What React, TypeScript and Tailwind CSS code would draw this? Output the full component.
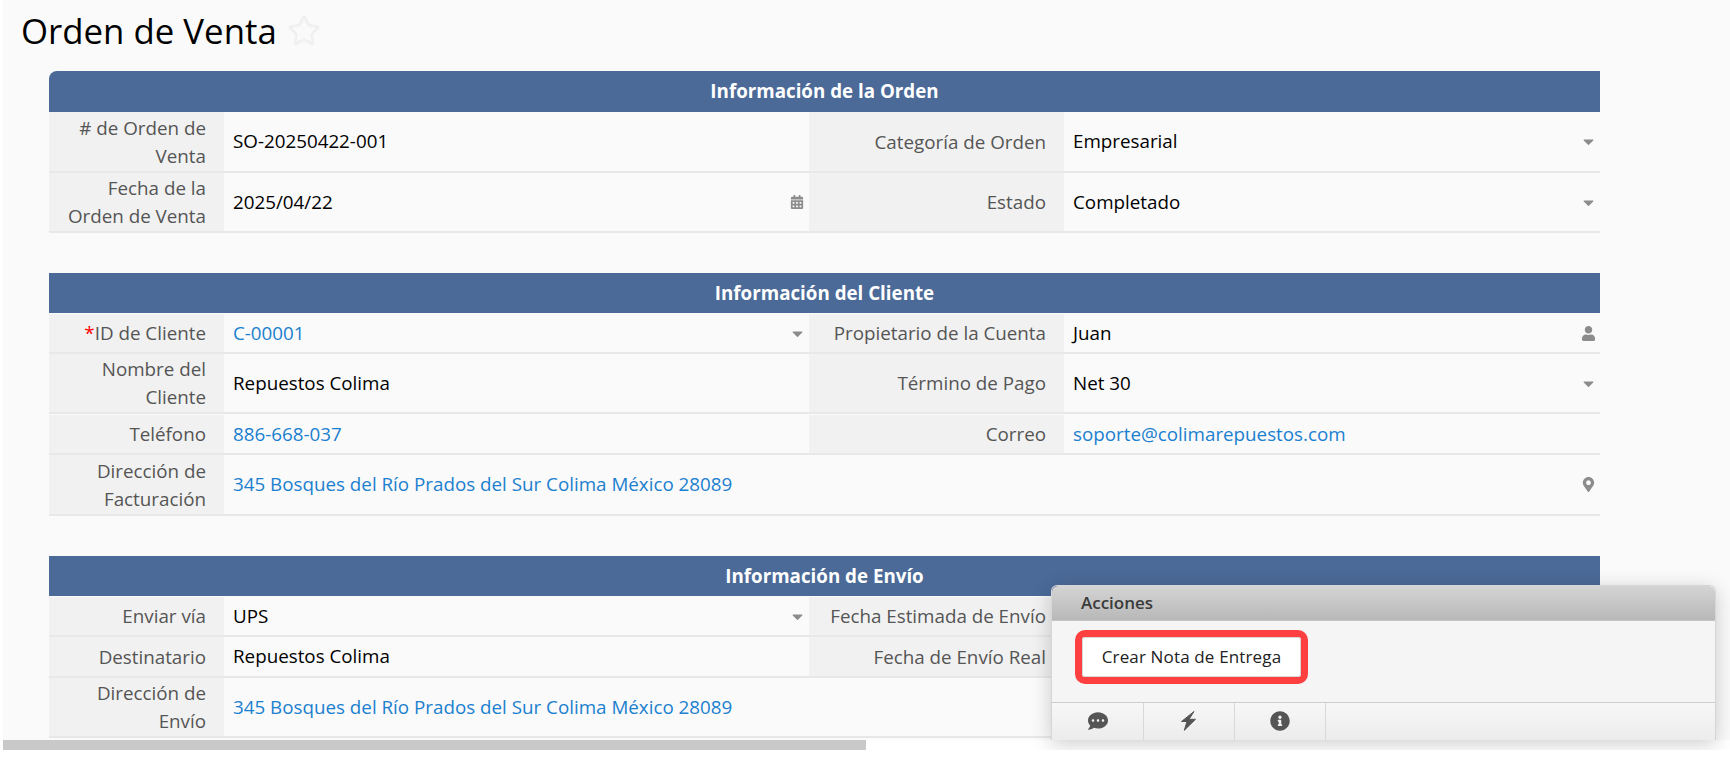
import { FaCalendarAlt, FaCaretDown, FaCommentDots, FaInfoCircle, FaMapMarkerAlt, FaUser } from 'react-icons/fa';
import { Star } from 'lucide-react';

type Field = {
  label: React.ReactNode;
  value?: string;
  link?: boolean;
  icon?: 'caret' | 'calendar' | 'user' | 'pin';
  wide?: boolean;
};

type Row = {
  height: string;
  fields: Field[];
};

type Section = {
  title: string;
  headerClass: string;
  rows: Row[];
};

const sections: Section[] = [
  {
    title: 'Información de la Orden',
    headerClass: 'h-[41px] rounded-tl-[8px]',
    rows: [
      {
        height: 'h-[61px]',
        fields: [
          { label: '# de Orden de Venta', value: 'SO-20250422-001' },
          { label: 'Categoría de Orden', value: 'Empresarial', icon: 'caret' },
        ],
      },
      {
        height: 'h-[60px]',
        fields: [
          { label: 'Fecha de la Orden de Venta', value: '2025/04/22', icon: 'calendar' },
          { label: 'Estado', value: 'Completado', icon: 'caret' },
        ],
      },
    ],
  },
  {
    title: 'Información del Cliente',
    headerClass: 'h-[40px]',
    rows: [
      {
        height: 'h-[41px] pt-px',
        fields: [
          {
            label: (
              <>
                <span className="text-[#ff0000]">*</span>ID de Cliente
              </>
            ),
            value: 'C-00001',
            link: true,
            icon: 'caret',
          },
          { label: 'Propietario de la Cuenta', value: 'Juan', icon: 'user' },
        ],
      },
      {
        height: 'h-[60px]',
        fields: [
          { label: 'Nombre del Cliente', value: 'Repuestos Colima' },
          { label: 'Término de Pago', value: 'Net 30', icon: 'caret' },
        ],
      },
      {
        height: 'h-[41px] pt-px',
        fields: [
          { label: 'Teléfono', value: '886-668-037', link: true },
          { label: 'Correo', value: 'soporte@colimarepuestos.com', link: true },
        ],
      },
      {
        height: 'h-[61px]',
        fields: [
          {
            label: 'Dirección de Facturación',
            value: '345 Bosques del Río Prados del Sur Colima México 28089',
            link: true,
            icon: 'pin',
            wide: true,
          },
        ],
      },
    ],
  },
  {
    title: 'Información de Envío',
    headerClass: 'h-[40px]',
    rows: [
      {
        height: 'h-[41px] pt-px',
        fields: [
          { label: 'Enviar vía', value: 'UPS', icon: 'caret' },
          { label: 'Fecha Estimada de Envío' },
        ],
      },
      {
        height: 'h-[41px]',
        fields: [
          { label: 'Destinatario', value: 'Repuestos Colima' },
          { label: 'Fecha de Envío Real' },
        ],
      },
      {
        height: 'h-[60px]',
        fields: [
          {
            label: 'Dirección de Envío',
            value: '345 Bosques del Río Prados del Sur Colima México 28089',
            link: true,
            wide: true,
          },
        ],
      },
    ],
  },
];

function FieldIcon({ icon }: { icon: Field['icon'] }) {
  if (icon === 'caret') return <FaCaretDown className="text-[17px] text-[#8c8c8c]" />;
  if (icon === 'calendar') return <FaCalendarAlt className="text-[14px] text-[#8c8c8c]" />;
  if (icon === 'user') return <FaUser className="text-[15px] text-[#8c8c8c]" />;
  if (icon === 'pin') return <FaMapMarkerAlt className="text-[15px] text-[#8c8c8c]" />;
  return null;
}

function FormField({ field }: { field: Field }) {
  return (
    <>
      <div className="flex items-center justify-end bg-[#f1f1f1] pl-3 pr-[18px] text-right leading-[28px] text-[#555555]">
        <span>{field.label}</span>
      </div>
      <div
        className={`flex items-center justify-between pl-[9px] pr-[1px] ${field.wide ? 'col-span-3' : ''}`}
      >
        <span className={field.link ? 'text-[#1b80cf]' : 'text-black'}>{field.value}</span>
        <span className="flex w-[22px] justify-center">
          <FieldIcon icon={field.icon} />
        </span>
      </div>
    </>
  );
}

function FormSection({ section }: { section: Section }) {
  return (
    <section className="flex flex-col">
      <h2
        className={`flex items-center justify-center bg-[#4b6a98] text-[18.75px] font-bold text-white ${section.headerClass}`}
      >
        {section.title}
      </h2>
      {section.rows.map((row, rowIndex) => (
        <div
          key={rowIndex}
          className={`grid grid-cols-[175px_585px_255px_536px] border-b-2 border-[#e8e8e8] ${row.height}`}
        >
          {row.fields.map((field, index) => (
            <FormField key={index} field={field} />
          ))}
        </div>
      ))}
    </section>
  );
}

function ActionsPanel() {
  return (
    <div className="pointer-events-none absolute inset-x-0 top-0 h-[750px] overflow-hidden">
      <aside className="absolute left-[1051px] top-[585px] flex w-[665px] flex-col rounded-t-[6px] border-x border-t border-[#d6d6d6] shadow-[0_4px_20px_rgba(0,0,0,0.2)]">
        <div className="flex h-[35px] items-center rounded-t-[6px] border-b border-[#c4c4c4] bg-gradient-to-b from-[#d4d4d4] to-[#b8b8b8] pl-[29px] text-[17px] font-semibold text-[#3a3a3a]">
          Acciones
        </div>
        <div className="h-[81px] bg-[#f5f5f5] pl-[23px] pt-[9px]">
          <div className="w-fit rounded-[10px] border-[7px] border-[#ff4040]">
            <button className="flex h-[40px] w-[219px] items-center justify-center rounded-[3px] border border-[#d8d8d8] bg-white text-[17px] tracking-[0.15px] text-[#222222]">
              Crear Nota de Entrega
            </button>
          </div>
        </div>
        <div className="flex h-[38px] border-t border-[#cccccc] bg-gradient-to-b from-[#f7f7f7] to-[#ececec] text-[#555555]">
          <div className="flex w-[92px] justify-center border-r border-[#d8d8d8] pt-[8px]">
            <FaCommentDots className="text-[20px]" />
          </div>
          <div className="flex w-[91px] justify-center border-r border-[#d8d8d8] pr-[2px] pt-[8px]">
            <svg width="15" height="20" viewBox="0 0 15 20" fill="currentColor" stroke="currentColor" strokeLinejoin="round">
              <polygon points="13,0.5 0.5,10.5 6,10.5 3.3,19.3 14.5,8.3 8,8.3" />
            </svg>
          </div>
          <div className="flex w-[91px] justify-center border-r border-[#d8d8d8] pt-[8px]">
            <FaInfoCircle className="text-[20px]" />
          </div>
        </div>
      </aside>
    </div>
  );
}

export default function App() {
  return (
    <div className="relative h-[760px] w-[1730px] overflow-hidden bg-white font-['Open_Sans',sans-serif] text-[18.8px]">
      <div className="ml-[3px] flex h-[740px] flex-col overflow-hidden bg-[#fafafa]">
        <div className="flex h-[71px] items-start gap-[10px] pl-[18px] pt-[7px]">
          <h1 className="text-[34.8px] leading-[47px] text-black">Orden de Venta</h1>
          <Star size={34} strokeWidth={2} className="mt-[7px] text-[#f0f0f0]" />
        </div>
        <div className="ml-[46px] flex w-[1551px] flex-col gap-[40px]">
          {sections.map((section) => (
            <FormSection key={section.title} section={section} />
          ))}
        </div>
      </div>
      <div className="ml-[3px] h-[10px] w-[863px] bg-[#c9c9c9]" />
      <ActionsPanel />
    </div>
  );
}
